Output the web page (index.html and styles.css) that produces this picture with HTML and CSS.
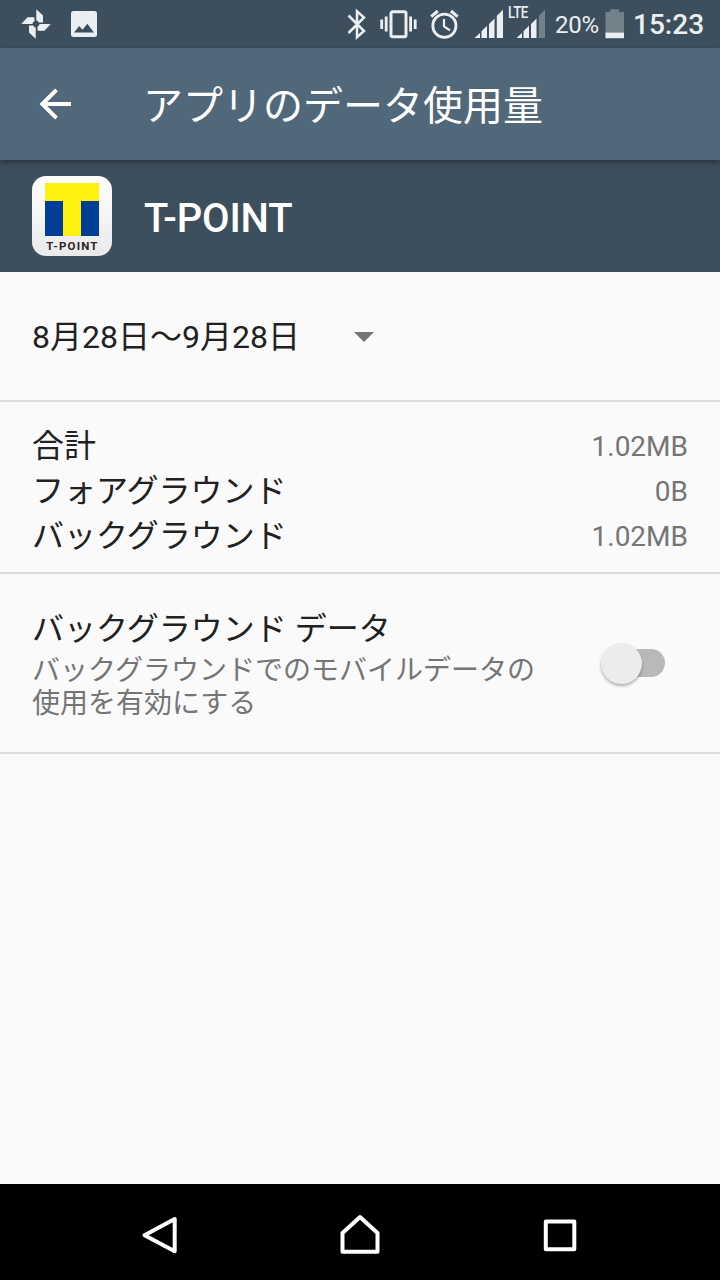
FILE: index.html
```html
<!DOCTYPE html>
<html lang="ja">
<head>
    <meta charset="UTF-8">
    <meta name="viewport" content="width=device-width, initial-scale=1.0">
    <title>アプリのデータ使用量</title>
    <link rel="stylesheet" href="styles.css">
</head>
<body>
    <div class="status-bar">
        <div class="status-left">
            <svg width="32" height="32" viewBox="0 0 32 32" fill="#eceff1">
                <path d="M16.3 1.2L23 7.6V14.4H18.6Q18.3 12.6 16.3 12.4Z"/>
                <path d="M30.8 16.1L24.4 22.8H17.6V18.4Q19.4 18.1 19.6 16.1Z"/>
                <path d="M15.7 30.8L9 24.4V17.6H13.4Q13.7 19.4 15.7 19.6Z"/>
                <path d="M1.2 15.9L7.6 9.2H14.4V13.6Q12.6 13.9 12.4 15.9Z"/>
            </svg>
            <svg width="26" height="26" viewBox="0 0 26 26">
                <rect width="26" height="26" rx="2.5" fill="#eceff1"/>
                <path d="M3 21.5L8.2 15L11.5 18.8L16.3 12.7L23 21.5Z" fill="#3d4f5d"/>
            </svg>
        </div>
        <div class="status-right">
            <svg class="bluetooth" width="20" height="32" viewBox="0 0 20 32" fill="none" stroke="#eceff1" stroke-width="2.5">
                <path d="M1.5 7.5L17 23L10 29.2V3.2L17 9.5L1.5 25"/>
            </svg>
            <svg class="vibrate" width="38" height="32" viewBox="0 0 38 32" fill="#eceff1">
                <rect x="11" y="3.8" width="15" height="25" rx="1.5" fill="none" stroke="#eceff1" stroke-width="3"/>
                <rect x="0.3" y="11.5" width="2.8" height="9.5"/>
                <rect x="4.8" y="8.5" width="2.8" height="15"/>
                <rect x="29.2" y="8.5" width="2.8" height="15"/>
                <rect x="33.8" y="11.5" width="2.8" height="9.5"/>
            </svg>
            <svg class="alarm" width="30" height="32" viewBox="0 0 30 32" fill="none" stroke="#eceff1">
                <circle cx="14.4" cy="17.7" r="11.6" stroke-width="2.8"/>
                <path d="M14 11V18.3L20 22.3" stroke-width="2.2"/>
                <path d="M1.2 8.6L7.8 3M27.6 8.6L21 3" stroke-width="3.2"/>
            </svg>
            <svg class="signal" width="30" height="32" viewBox="0 0 30 32" fill="#eceff1">
                <path d="M0.5 30L6 25V30ZM7.5 23.3L13 17.8V30H7.5ZM15 16L20.5 10.5V30H15ZM22.8 7.8L29 1.8V30H22.8Z"/>
            </svg>
            <div class="lte">
                <svg width="30" height="32" viewBox="0 0 30 32" fill="#eceff1">
                    <path d="M0.5 30L6 25V30ZM7.5 23.3L13 17.8V30H7.5ZM15 16L20.5 10.5V30H15Z"/>
                    <path d="M22.8 7.8L29 1.8V30H22.8Z" fill="#73818b"/>
                </svg>
                <span class="lte-label">LTE</span>
            </div>
            <span class="percent">20%</span>
            <svg class="battery" width="20" height="32" viewBox="0 0 20 32">
                <path d="M0.5 4H5.3V1.2H14V4H19V25H0.5Z" fill="#73818b"/>
                <rect x="0.5" y="24.6" width="18.5" height="5.6" fill="#eceff1"/>
            </svg>
            <span class="clock">15:23</span>
        </div>
    </div>

    <header class="app-bar">
        <svg width="34" height="34" viewBox="0 0 34 34" fill="none" stroke="#fff" stroke-width="4">
            <path d="M33 17H4M18.5 2.8L4.3 17L18.5 31.2"/>
        </svg>
        <h1>アプリのデータ使用量</h1>
    </header>

    <div class="app-header">
        <div class="app-icon">
            <div class="app-mark"></div>
            <span class="app-label">T-POINT</span>
        </div>
        <h2>T-POINT</h2>
    </div>

    <main>
        <div class="cycle">
            <span>8月28日～9月28日</span>
            <i class="caret"></i>
        </div>

        <dl class="usage">
            <div class="usage-row"><dt>合計</dt><dd>1.02MB</dd></div>
            <div class="usage-row"><dt>フォアグラウンド</dt><dd>0B</dd></div>
            <div class="usage-row"><dt>バックグラウンド</dt><dd>1.02MB</dd></div>
        </dl>

        <div class="preference">
            <div class="preference-text">
                <h3>バックグラウンド データ</h3>
                <p>バックグラウンドでのモバイルデータの<br>使用を有効にする</p>
            </div>
            <div class="switch"><div class="thumb"></div></div>
        </div>
    </main>

    <nav class="nav-bar">
        <svg width="44" height="44" viewBox="0 0 44 44">
            <path d="M36.7 5V37.3L6.5 21.3Z"/>
        </svg>
        <svg width="44" height="44" viewBox="0 0 44 44">
            <path d="M22 3L39.5 19V37.7H4.5V19Z"/>
        </svg>
        <svg width="44" height="44" viewBox="0 0 44 44">
            <path d="M7.8 7.4H36.3V35.3H7.8Z"/>
        </svg>
    </nav>
</body>
</html>
```
FILE: styles.css
```css
* {
    margin: 0;
    padding: 0;
    box-sizing: border-box;
}

body {
    font-family: Roboto, 'Noto Sans CJK JP', sans-serif;
    background: #fafafa;
    color: #212121;
    height: 1280px;
    display: flex;
    flex-direction: column;
    overflow: hidden;
}

svg {
    display: block;
    flex: none;
}

h1, h2, h3 {
    font-weight: 400;
}

/* Status bar */
.status-bar {
    height: 48px;
    background: #3d4f5d;
    color: #eceff1;
    display: flex;
    justify-content: space-between;
    padding: 0 16px 0 20px;
}

.status-left,
.status-right {
    display: flex;
    align-items: center;
}

.status-left {
    gap: 19px;
}

.vibrate {
    margin-left: 13px;
}

.alarm {
    margin-left: 12px;
}

.signal {
    margin-left: 14px;
}

.lte {
    position: relative;
    margin-left: 12px;
}

.lte-label {
    position: absolute;
    left: -8px;
    top: -4px;
    font: 500 17px/17px Roboto, sans-serif;
    letter-spacing: -0.5px;
    transform: scaleX(0.78);
    transform-origin: left;
}

.percent {
    width: 44px;
    margin-left: 9px;
    font-size: 24px;
    line-height: 48px;
    padding-top: 2px;
    letter-spacing: -0.2px;
    white-space: nowrap;
}

.battery {
    margin-left: 6px;
}

.clock {
    width: 71px;
    margin-left: 8px;
    font-size: 28px;
    font-weight: 500;
    line-height: 48px;
    padding-top: 2px;
    white-space: nowrap;
}

/* Toolbar */
.app-bar {
    position: relative;
    height: 112px;
    background: #51677a;
    color: #fff;
    display: flex;
    align-items: center;
    gap: 71px;
    padding-left: 38px;
    box-shadow: 0 2px 6px rgba(0, 0, 0, 0.4);
}

.app-bar h1 {
    font-size: 40px;
    line-height: 60px;
    padding-top: 6px;
}

.app-header {
    height: 112px;
    background: #3d4f5d;
    color: #fff;
    display: flex;
    align-items: center;
    gap: 32px;
    padding-left: 32px;
}

.app-header h2 {
    font-size: 40px;
    font-weight: 500;
    letter-spacing: -0.2px;
    padding-top: 4px;
}

.app-icon {
    width: 80px;
    height: 80px;
    border-radius: 14px;
    background: linear-gradient(#fff, #e9e9e9);
    display: flex;
    flex-direction: column;
    align-items: center;
    padding-top: 7px;
}

.app-mark {
    width: 54px;
    height: 53px;
    background:
        linear-gradient(#fff10f, #fff10f) top / 54px 18px no-repeat,
        linear-gradient(#fff10f, #fff10f) center / 18px 53px no-repeat,
        #003e98;
}

.app-label {
    margin-top: 2px;
    font: 700 11.5px/16px Roboto, sans-serif;
    letter-spacing: 1.2px;
    margin-right: -1px;
    color: #302525;
}

/* Content */
main {
    flex: 1;
}

.cycle,
.usage,
.preference {
    border-bottom: 2px solid #dcdcdc;
}

.cycle {
    height: 130px;
    display: flex;
    align-items: center;
    gap: 54px;
    padding-left: 32px;
    font-size: 32px;
}

.cycle span {
    padding-bottom: 4px;
}

.caret {
    margin-top: 1px;
    border: 10px solid transparent;
    border-top-color: #757575;
    border-bottom: 0;
}

.usage {
    height: 172px;
    padding: 20px 32px 0;
}

.usage-row {
    height: 45px;
    display: flex;
    justify-content: space-between;
    line-height: 45px;
}

.usage dt {
    font-size: 32px;
    padding-top: 2px;
}

.usage dd {
    font-size: 28px;
    padding-top: 2px;
    color: #757575;
}

.preference {
    height: 180px;
    display: flex;
    justify-content: space-between;
    padding: 32px 55px 0 32px;
}

.preference h3 {
    font-size: 32px;
    line-height: 45px;
    padding-top: 1px;
}

.preference p {
    font-size: 28px;
    line-height: 33px;
    padding-top: 2px;
    color: #757575;
}

.switch {
    width: 65px;
    height: 28px;
    margin-top: 43px;
    border-radius: 14px;
    background: linear-gradient(#b9b9b9, #b9b9b9) right / 50px no-repeat;
}

.thumb {
    width: 41px;
    height: 41px;
    margin-top: -6px;
    margin-left: 1px;
    border-radius: 50%;
    background: #ececec;
    box-shadow: 0 2px 3px rgba(0, 0, 0, 0.3);
}

/* Navigation buttons */
.nav-bar {
    height: 96px;
    background: #000;
    display: flex;
    justify-content: center;
    gap: 156px;
    padding-top: 30px;
}

.nav-bar path {
    fill: none;
    stroke: #fff;
    stroke-width: 4;
    stroke-linejoin: round;
}
```
